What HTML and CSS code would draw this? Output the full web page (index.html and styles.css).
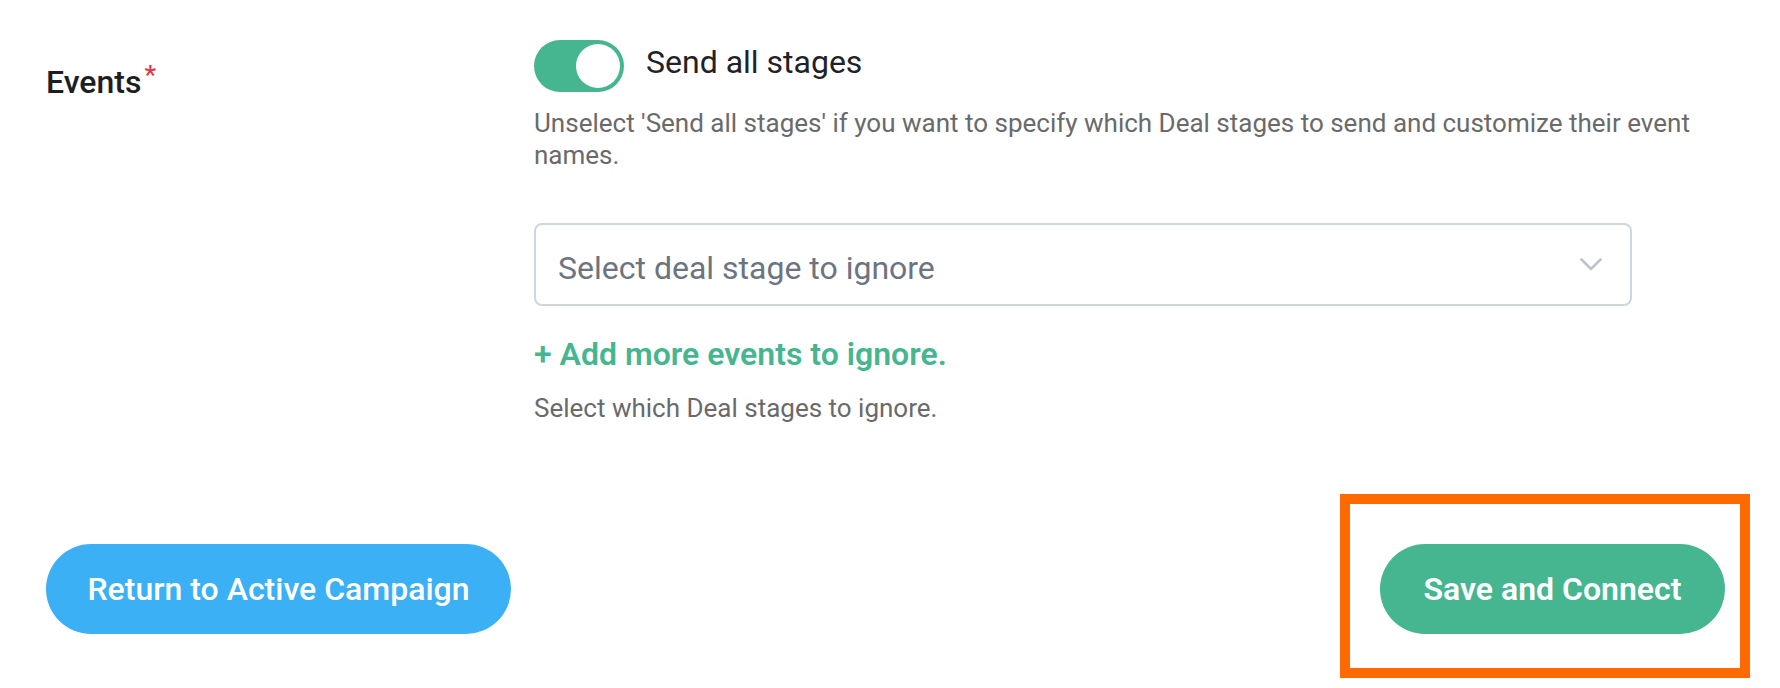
FILE: index.html
```html
<!DOCTYPE html>
<html lang="en">
<head>
<meta charset="utf-8">
<title>Events settings</title>
<link rel="stylesheet" href="styles.css">
</head>
<body>
<main class="page">
  <section class="field">
    <div class="field-label">Events<span class="required">*</span></div>
    <div class="field-body">
      <div class="toggle-row">
        <span class="toggle" role="switch" aria-checked="true"><span class="knob"></span></span>
        <span class="toggle-text">Send all stages</span>
      </div>
      <p class="help">Unselect 'Send all stages' if you want to specify which Deal stages to send and customize their event names.</p>
      <div class="select">
        <span class="placeholder">Select deal stage to ignore</span>
        <svg class="chevron" width="22" height="13" viewBox="0 0 22 13" aria-hidden="true"><path d="M1.5 1.5 L11 11 L20.5 1.5" fill="none" stroke="#bcc3cc" stroke-width="2.6" stroke-linecap="round" stroke-linejoin="round"/></svg>
      </div>
      <a class="add-link" href="#">+ Add more events to ignore.</a>
      <p class="hint">Select which Deal stages to ignore.</p>
    </div>
  </section>
  <footer class="actions">
    <button class="btn btn-blue" type="button">Return to Active Campaign</button>
    <button class="btn btn-green" type="button">Save and Connect</button>
  </footer>
</main>
<div class="highlight" aria-hidden="true"></div>
</body>
</html>
```
FILE: styles.css
```css
html, body {
  margin: 0;
  padding: 0;
  background: #ffffff;
}

body {
  position: relative;
  width: 1780px;
  height: 688px;
  overflow: hidden;
  font-family: Roboto, "Liberation Sans", Arial, sans-serif;
  color: #1f2226;
}

.page {
  padding: 40px 55px 0 46px;
}

.field {
  display: grid;
  grid-template-columns: 488px 1fr;
}

.field-label {
  padding-top: 22px;
  font-size: 32px;
  line-height: 40px;
  font-weight: 500;
  color: #1c1e21;
}

.required {
  display: inline-block;
  margin-left: 3px;
  font-size: 26px;
  line-height: 1;
  color: #e3344b;
  vertical-align: top;
  position: relative;
  top: 0;
}

.field-body {
  display: flex;
  flex-direction: column;
  align-items: flex-start;
}

.toggle-row {
  display: flex;
  align-items: flex-start;
  gap: 22px;
}

.toggle {
  display: flex;
  justify-content: flex-end;
  align-items: center;
  box-sizing: border-box;
  width: 90px;
  height: 52px;
  padding: 4px;
  border-radius: 26px;
  background: #45b68f;
}

.knob {
  width: 44px;
  height: 44px;
  border-radius: 50%;
  background: #ffffff;
}

.toggle-text {
  font-size: 32px;
  line-height: 44px;
  color: #1f2226;
}

.help {
  margin: 15px 0 0;
  font-size: 26px;
  line-height: 32px;
  color: #6a6a6a;
}

.select {
  display: flex;
  align-items: center;
  justify-content: space-between;
  box-sizing: border-box;
  width: 1098px;
  height: 83px;
  margin-top: 52px;
  padding: 6px 28px 0 22px;
  border: 2px solid #d0d6de;
  border-radius: 8px;
  background: #ffffff;
}

.placeholder {
  font-size: 32px;
  color: #6c7480;
}

.chevron {
  display: block;
  margin-top: -6px;
}

.add-link {
  margin-top: 28px;
  font-size: 32px;
  line-height: 40px;
  font-weight: 600;
  color: #45b68f;
  text-decoration: none;
}

.hint {
  margin: 18px 0 0;
  font-size: 26px;
  line-height: 32px;
  color: #6a6a6a;
}

.actions {
  display: flex;
  justify-content: space-between;
  align-items: center;
  margin-top: 120px;
}

.btn {
  height: 90px;
  border: none;
  border-radius: 45px;
  font-family: inherit;
  font-size: 32px;
  color: #ffffff;
  cursor: pointer;
}

.btn-blue {
  width: 465px;
  background: #3bb0f5;
  font-weight: 500;
}

.btn-green {
  width: 345px;
  background: #45b68f;
  font-weight: 600;
}

.highlight {
  position: absolute;
  left: 1340px;
  top: 494px;
  width: 410px;
  height: 184px;
  box-sizing: border-box;
  border: 10px solid #ff6a00;
  pointer-events: none;
}
```
